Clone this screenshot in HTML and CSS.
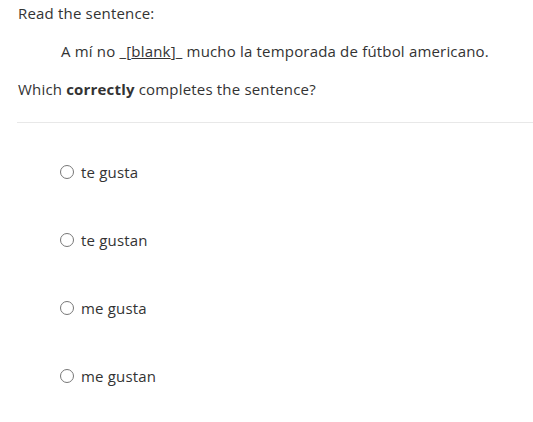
FILE: index.html
```html
<!DOCTYPE html>
<html>
<head>
<meta charset="utf-8">
<link rel="stylesheet" href="styles.css">
</head>
<body>
<div class="question">
  <p class="line">Read the sentence:</p>
  <p class="line indent">A mí no <span class="blank">_[<u>blank</u>]_</span> mucho la temporada de fútbol americano.</p>
  <p class="line">Which <strong>correctly</strong> completes the sentence?</p>
</div>
<hr class="divider">
<ul class="answers">
  <li class="answer"><span class="radio"></span><span>te gusta</span></li>
  <li class="answer"><span class="radio"></span><span>te gustan</span></li>
  <li class="answer"><span class="radio"></span><span>me gusta</span></li>
  <li class="answer"><span class="radio"></span><span>me gustan</span></li>
</ul>
</body>
</html>
```
FILE: styles.css
```css
html, body {
  margin: 0;
  padding: 0;
  background: #fff;
}
body {
  font-family: "Open Sans", "Liberation Sans", sans-serif;
  font-size: 15px;
  letter-spacing: 0.18px;
  color: #333;
}
.question {
  padding: 3px 0 0 18px;
}
.line {
  margin: 0 0 18px 0;
  line-height: 20px;
}
.indent {
  padding-left: 43px;
}
.line:last-child {
  margin-bottom: 0;
}
.blank u {
  text-decoration: underline;
}
strong {
  font-weight: 700;
}
.divider {
  border: none;
  border-top: 1px solid #e8e8e8;
  margin: 23px 0 0 17px;
  height: 0;
}
.answers {
  list-style: none;
  margin: 0;
  padding: 39px 0 0 60px;
  display: flex;
  flex-direction: column;
  gap: 48px;
}
.answer {
  display: flex;
  align-items: center;
  gap: 7px;
  line-height: 20px;
}
.radio {
  width: 12px;
  height: 12px;
  border: 1px solid #777;
  border-radius: 50%;
  display: inline-block;
}
```
